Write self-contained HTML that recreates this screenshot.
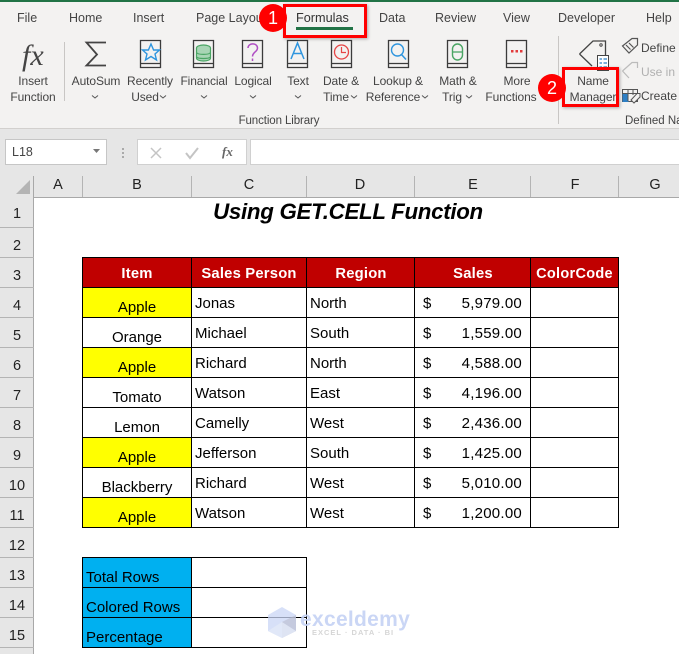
<!DOCTYPE html>
<html><head><meta charset="utf-8">
<style>
html,body{margin:0;padding:0}
body{width:679px;height:654px;overflow:hidden;position:relative;background:#fff;font-family:"Liberation Sans",sans-serif;color:#000}
.a{position:absolute}
.t{position:absolute;white-space:nowrap;line-height:16px}
.c{transform:translateX(-50%)}
.tab{font-size:12.5px;color:#444;top:10px}
.rb{font-size:12px;color:#444;letter-spacing:-.1px;transform:translateX(-50%);line-height:16px;position:absolute;white-space:nowrap}
.ch{font-size:14.5px;color:#222;top:177px;transform:translateX(-50%);position:absolute;line-height:16px}
.rh{font-size:14.5px;color:#222;left:0;width:34px;text-align:center;position:absolute;line-height:16px}
.h{position:absolute;left:0;width:34px;height:1px;background:#b4b4b4}
.v{position:absolute;top:176px;width:1px;height:21px;background:#b4b4b4}
.hd{position:absolute;font-weight:bold;font-size:14.8px;letter-spacing:.2px;color:#fff;top:265px;line-height:18px;white-space:nowrap;transform:translateX(-50%)}
.d{position:absolute;font-size:15px;line-height:18px;margin-top:1px;white-space:nowrap;color:#000}
.m{transform:translateX(-50%)}
.r{transform:translateX(-100%);letter-spacing:.25px}
.bk{background:#000;position:absolute}
.badge{position:absolute;width:28px;height:28px;border-radius:50%;background:#f00;color:#fff;font-size:18px;line-height:28px;text-align:center}
svg{position:absolute;overflow:visible}
</style></head><body>

<!-- ribbon -->
<div class="a" style="left:0;top:0;width:679px;height:128px;background:#f3f2f1"></div>
<div class="a" style="left:0;top:0;width:679px;height:2px;background:#217346"></div>
<div class="a" style="left:0;top:128px;width:679px;height:1px;background:#d2d0ce"></div>
<div class="a" style="left:0;top:129px;width:679px;height:68px;background:#e6e6e6"></div>

<span class="t tab" style="left:17px">File</span>
<span class="t tab" style="left:69px">Home</span>
<span class="t tab" style="left:133px">Insert</span>
<span class="t tab" style="left:196px;width:68px;overflow:hidden">Page Layout</span>
<span class="t tab" style="left:296px;font-size:12.7px;color:#333">Formulas</span>
<div class="a" style="left:296px;top:27px;width:57px;height:3px;background:#217346"></div>
<span class="t tab" style="left:379px">Data</span>
<span class="t tab" style="left:435px">Review</span>
<span class="t tab" style="left:503px">View</span>
<span class="t tab" style="left:558px">Developer</span>
<span class="t tab" style="left:646px">Help</span>

<!-- separators -->
<div class="a" style="left:64px;top:42px;width:1px;height:59px;background:#c8c6c4"></div>
<div class="a" style="left:558px;top:36px;width:1px;height:88px;background:#c8c6c4"></div>

<!-- icons -->
<span class="t" style="left:22px;top:42px;font-family:'Liberation Serif',serif;font-style:italic;font-size:30px;line-height:28px;color:#444">fx</span>
<svg style="left:0;top:0" width="679" height="130" fill="none">
<path d="M106 42.500H86.500L97 54.500L86.500 65.500H106" stroke="#444" stroke-width="1.800"/>
<!-- books -->
<g stroke="#3b3b3b" stroke-width="1.300">
<path d="M140.500 40.500H160.500V67.500H140.500ZM140.500 63.500H160.500"/>
<path d="M193.500 40.500H213.500V67.500H193.500ZM193.500 63.500H213.500"/>
<path d="M242.500 40.500H262.500V67.500H242.500ZM242.500 63.500H262.500"/>
<path d="M287.500 40.500H307.500V67.500H287.500ZM287.500 63.500H307.500"/>
<path d="M331.500 40.500H351.500V67.500H331.500ZM331.500 63.500H351.500"/>
<path d="M388.500 40.500H408.500V67.500H388.500ZM388.500 63.500H408.500"/>
<path d="M447.500 40.500H467.500V67.500H447.500ZM447.500 63.500H467.500"/>
<path d="M506.500 40.500H526.500V67.500H506.500ZM506.500 63.500H526.500"/>
</g>
<path d="M151 44L153.600 50H159.500L155 54L156.500 60L151 56.500L145.500 60L147 54L142.500 50H148.400Z" stroke="#2e95de" stroke-width="1.400"/>
<g stroke="#4aa564" stroke-width="1.200" fill="#a8d5b5"><ellipse cx="203.500" cy="48" rx="7" ry="3"/><path d="M196.500 48V58C196.500 60 200 61 203.500 61S210.500 60 210.500 58V48"/><path d="M196.500 52.500C198 55 209 55 210.500 52.500M196.500 57C198 59 209 59 210.500 57" fill="none"/></g>
<path d="M248 48C248 42.500 257.500 42.500 257.500 48C257.500 52 252.500 52 252.500 56.500M252.500 58.500V61" stroke="#b04fc4" stroke-width="1.500"/>
<path d="M291 59L297.500 43L304 59M293.500 53.500H301.500" stroke="#2e95de" stroke-width="1.500"/>
<circle cx="341.500" cy="52" r="7" stroke="#e64545" stroke-width="1.300"/><path d="M341.500 47V52.500H346" stroke="#e64545" stroke-width="1.200"/>
<circle cx="397.500" cy="50" r="6" stroke="#2e95de" stroke-width="1.400"/><path d="M401.500 54.500L406 59.500" stroke="#2e95de" stroke-width="1.500"/>
<rect x="452.500" y="44" width="10" height="16" rx="5" stroke="#4aa564" stroke-width="1.400"/><path d="M452.500 52H462.500" stroke="#4aa564" stroke-width="1.300"/>
<g fill="#e23b3b"><rect x="511" y="50" width="2.500" height="2.500"/><rect x="515.500" y="50" width="2.500" height="2.500"/><rect x="520" y="50" width="2.500" height="2.500"/></g>
<!-- tag -->
<path d="M579.500 54L593 41H605.500V56M592 66L579.500 54" stroke="#444" stroke-width="1.300"/>
<circle cx="601" cy="45" r="1.200" stroke="#444"/>
<rect x="597.500" y="55.500" width="11" height="15" fill="#fff" stroke="#444"/>
<path d="M599.500 59h2.500M603.500 59h3.500M599.500 63h2.500M603.500 63h3.500M599.500 67h2.500M603.500 67h3.500" stroke="#2e7fc4" stroke-width="1.300"/>
<path d="M622.500 46L632 38.500H637.500V45L629 53ZM626 45L630.500 49.500M629 43L633.500 47.500" stroke="#555" stroke-width="1.200"/>
<path d="M622.500 71L632 62.500H637.500V68M629 78L622.500 71" stroke="#bbb" stroke-width="1.200"/>
<rect x="622.500" y="89.500" width="15" height="12" stroke="#555"/><rect x="622.500" y="94" width="6" height="8" fill="#2e7fc4"/><path d="M622.500 93.500H637.500M628 89.500V101M633 89.500V95" stroke="#555"/><path d="M631 100L637 93.500H640V97L634 103Z" fill="#f3f2f1" stroke="#555"/>
<!-- chevrons -->
<g stroke="#555" stroke-width="1"><path d="M92 95.500l3 2.500l3-2.500"/><path d="M160 95.500l3 2.500l3-2.500"/><path d="M201 95.500l3 2.500l3-2.500"/><path d="M250 95.500l3 2.500l3-2.500"/><path d="M295 95.500l3 2.500l3-2.500"/><path d="M351 95.500l3 2.500l3-2.500"/><path d="M422 95.500l3 2.500l3-2.500"/><path d="M466 95.500l3 2.500l3-2.500"/></g>
</svg>

<span class="rb" style="left:33px;top:73px">Insert</span><span class="rb" style="left:33px;top:89px">Function</span>
<span class="rb" style="left:96px;top:73px">AutoSum</span>
<span class="rb" style="left:150px;top:73px">Recently</span><span class="rb" style="left:145px;top:89px">Used</span>
<span class="rb" style="left:204px;top:73px">Financial</span>
<span class="rb" style="left:253px;top:73px">Logical</span>
<span class="rb" style="left:298px;top:73px">Text</span>
<span class="rb" style="left:341px;top:73px">Date &amp;</span><span class="rb" style="left:336px;top:89px">Time</span>
<span class="rb" style="left:398px;top:73px">Lookup &amp;</span><span class="rb" style="left:393px;top:89px">Reference</span>
<span class="rb" style="left:458px;top:73px">Math &amp;</span><span class="rb" style="left:452px;top:89px">Trig</span>
<span class="rb" style="left:517px;top:73px">More</span><span class="rb" style="left:511px;top:89px">Functions</span>
<span class="rb" style="left:593px;top:73px">Name</span><span class="rb" style="left:593px;top:89px">Manager</span>
<span class="t" style="left:641px;top:40px;font-size:12px;color:#444">Define</span>
<span class="t" style="left:641px;top:64px;font-size:12px;color:#b0b0b0">Use in F</span>
<span class="t" style="left:641px;top:88px;font-size:12px;color:#444">Create f</span>
<span class="rb" style="left:279px;top:113px;font-size:11.500px">Function Library</span>
<span class="t" style="left:625px;top:113px;font-size:11.500px;color:#444">Defined Na</span>

<!-- red boxes -->
<div class="a" style="left:283px;top:4px;width:78px;height:28px;border:3px solid #f00;box-shadow:1px 1px 3px rgba(0,0,0,.3)"></div>
<div class="a" style="left:562px;top:67px;width:51px;height:34px;border:3px solid #f00;box-shadow:1px 1px 3px rgba(0,0,0,.3)"></div>
<div class="badge" style="left:259px;top:4px">1</div>
<div class="badge" style="left:538px;top:74px">2</div>

<!-- formula bar -->
<div class="a" style="left:5px;top:139px;width:100px;height:24px;background:#fff;border:1px solid #c6c6c6"></div>
<span class="t" style="left:12px;top:144px;font-size:12.500px;color:#444">L18</span>
<svg style="left:0;top:0" width="300" height="170"><path d="M93 149H100L96.500 153Z" fill="#777"/><path d="M122 148h2v2h-2zM122 152h2v2h-2zM122 156h2v2h-2z" fill="#aaa"/></svg>
<div class="a" style="left:137px;top:139px;width:108px;height:24px;background:#fff;border:1px solid #d0d0d0"></div>
<svg style="left:0;top:0" width="300" height="170"><path d="M151 148L161 158M161 148L151 158" stroke="#c4c4c4" stroke-width="1.500" fill="none"/><path d="M186 153L190 158L198 148" stroke="#c4c4c4" stroke-width="2" fill="none"/></svg>
<span class="t" style="left:222px;top:144px;font-family:'Liberation Serif',serif;font-style:italic;font-weight:bold;font-size:13px;color:#666">fx</span>
<div class="a" style="left:250px;top:139px;width:429px;height:24px;background:#fff;border:1px solid #d0d0d0;border-right:0;box-sizing:content-box"></div>

<!-- headers -->
<div class="a" style="left:0;top:197px;width:679px;height:1px;background:#a8a8a8"></div>
<div class="a" style="left:0;top:197px;width:34px;height:457px;background:#e6e6e6"></div>
<div class="a" style="left:33px;top:176px;width:1px;height:478px;background:#a8a8a8"></div>
<svg style="left:0;top:0" width="40" height="200"><path d="M30 180V194H16Z" fill="#b4b4b4"/></svg>
<div class="v" style="left:82px"></div><div class="v" style="left:191px"></div><div class="v" style="left:306px"></div><div class="v" style="left:414px"></div><div class="v" style="left:530px"></div><div class="v" style="left:618px"></div>
<span class="ch" style="left:58px">A</span><span class="ch" style="left:137px">B</span><span class="ch" style="left:249px">C</span><span class="ch" style="left:360px">D</span><span class="ch" style="left:473px">E</span><span class="ch" style="left:575px">F</span><span class="ch" style="left:655px">G</span>

<div class="h" style="top:227px"></div><div class="h" style="top:257px"></div><div class="h" style="top:287px"></div><div class="h" style="top:317px"></div><div class="h" style="top:347px"></div><div class="h" style="top:377px"></div><div class="h" style="top:407px"></div><div class="h" style="top:437px"></div><div class="h" style="top:467px"></div><div class="h" style="top:497px"></div><div class="h" style="top:527px"></div><div class="h" style="top:557px"></div><div class="h" style="top:587px"></div><div class="h" style="top:617px"></div><div class="h" style="top:647px"></div>
<span class="rh" style="top:206px">1</span><span class="rh" style="top:238px">2</span><span class="rh" style="top:268px">3</span><span class="rh" style="top:298px">4</span><span class="rh" style="top:328px">5</span><span class="rh" style="top:358px">6</span><span class="rh" style="top:388px">7</span><span class="rh" style="top:418px">8</span><span class="rh" style="top:448px">9</span><span class="rh" style="top:478px">10</span><span class="rh" style="top:508px">11</span><span class="rh" style="top:538px">12</span><span class="rh" style="top:568px">13</span><span class="rh" style="top:598px">14</span><span class="rh" style="top:628px">15</span>

<!-- title -->
<span class="t c" style="left:348px;top:199px;font-size:22.300px;line-height:26px;font-weight:bold;font-style:italic;letter-spacing:-.3px">Using GET.CELL Function</span>

<!-- fills -->
<div class="a" style="left:82px;top:257px;width:537px;height:30px;background:#c00000"></div>
<div class="a" style="left:82px;top:287px;width:109px;height:30px;background:#ff0"></div>
<div class="a" style="left:82px;top:347px;width:109px;height:30px;background:#ff0"></div>
<div class="a" style="left:82px;top:437px;width:109px;height:30px;background:#ff0"></div>
<div class="a" style="left:82px;top:497px;width:109px;height:30px;background:#ff0"></div>
<div class="a" style="left:82px;top:557px;width:109px;height:90px;background:#00b0f0"></div>

<!-- borders main -->
<div class="bk" style="left:82px;top:257px;width:537px;height:1px"></div>
<div class="bk" style="left:82px;top:287px;width:537px;height:1px"></div>
<div class="bk" style="left:82px;top:317px;width:537px;height:1px"></div>
<div class="bk" style="left:82px;top:347px;width:537px;height:1px"></div>
<div class="bk" style="left:82px;top:377px;width:537px;height:1px"></div>
<div class="bk" style="left:82px;top:407px;width:537px;height:1px"></div>
<div class="bk" style="left:82px;top:437px;width:537px;height:1px"></div>
<div class="bk" style="left:82px;top:467px;width:537px;height:1px"></div>
<div class="bk" style="left:82px;top:497px;width:537px;height:1px"></div>
<div class="bk" style="left:82px;top:527px;width:537px;height:1px"></div>
<div class="bk" style="left:82px;top:257px;width:1px;height:271px"></div>
<div class="bk" style="left:191px;top:257px;width:1px;height:271px"></div>
<div class="bk" style="left:306px;top:257px;width:1px;height:271px"></div>
<div class="bk" style="left:414px;top:257px;width:1px;height:271px"></div>
<div class="bk" style="left:530px;top:257px;width:1px;height:271px"></div>
<div class="bk" style="left:618px;top:257px;width:1px;height:271px"></div>
<!-- borders small -->
<div class="bk" style="left:82px;top:557px;width:225px;height:1px"></div>
<div class="bk" style="left:82px;top:587px;width:225px;height:1px"></div>
<div class="bk" style="left:82px;top:617px;width:225px;height:1px"></div>
<div class="bk" style="left:82px;top:647px;width:225px;height:1px"></div>
<div class="bk" style="left:82px;top:557px;width:1px;height:91px"></div>
<div class="bk" style="left:191px;top:557px;width:1px;height:91px"></div>
<div class="bk" style="left:306px;top:557px;width:1px;height:91px"></div>

<!-- table text -->
<span class="hd" style="left:137px">Item</span><span class="hd" style="left:249px">Sales Person</span><span class="hd" style="left:361px">Region</span><span class="hd" style="left:473px">Sales</span><span class="hd" style="left:574.500px;font-size:14.500px;letter-spacing:.3px">ColorCode</span>

<span class="d m" style="left:137px;top:298px">Apple</span><span class="d m" style="left:137px;top:328px">Orange</span><span class="d m" style="left:137px;top:358px">Apple</span><span class="d m" style="left:137px;top:388px">Tomato</span><span class="d m" style="left:137px;top:418px">Lemon</span><span class="d m" style="left:137px;top:448px">Apple</span><span class="d m" style="left:137px;top:478px">Blackberry</span><span class="d m" style="left:137px;top:508px">Apple</span>

<span class="d" style="left:195px;top:294px">Jonas</span><span class="d" style="left:195px;top:324px">Michael</span><span class="d" style="left:195px;top:354px">Richard</span><span class="d" style="left:195px;top:384px">Watson</span><span class="d" style="left:195px;top:414px">Camelly</span><span class="d" style="left:195px;top:444px">Jefferson</span><span class="d" style="left:195px;top:474px">Richard</span><span class="d" style="left:195px;top:504px">Watson</span>

<span class="d" style="left:310px;top:294px">North</span><span class="d" style="left:310px;top:324px">South</span><span class="d" style="left:310px;top:354px">North</span><span class="d" style="left:310px;top:384px">East</span><span class="d" style="left:310px;top:414px">West</span><span class="d" style="left:310px;top:444px">South</span><span class="d" style="left:310px;top:474px">West</span><span class="d" style="left:310px;top:504px">West</span>

<span class="d" style="left:423px;top:294px">$</span><span class="d" style="left:423px;top:324px">$</span><span class="d" style="left:423px;top:354px">$</span><span class="d" style="left:423px;top:384px">$</span><span class="d" style="left:423px;top:414px">$</span><span class="d" style="left:423px;top:444px">$</span><span class="d" style="left:423px;top:474px">$</span><span class="d" style="left:423px;top:504px">$</span>

<span class="d r" style="left:522px;top:294px">5,979.00</span><span class="d r" style="left:522px;top:324px">1,559.00</span><span class="d r" style="left:522px;top:354px">4,588.00</span><span class="d r" style="left:522px;top:384px">4,196.00</span><span class="d r" style="left:522px;top:414px">2,436.00</span><span class="d r" style="left:522px;top:444px">1,425.00</span><span class="d r" style="left:522px;top:474px">5,010.00</span><span class="d r" style="left:522px;top:504px">1,200.00</span>

<span class="d" style="left:86px;top:568px">Total Rows</span><span class="d" style="left:86px;top:598px">Colored Rows</span><span class="d" style="left:86px;top:628px">Percentage</span>

<!-- watermark -->
<svg style="left:0;top:0" width="679" height="654" fill="none"><path d="M282 607L296 615V631L282 638L268 631V615Z" fill="#c9d6f5" opacity=".75"/><path d="M282 622L296 615V631L282 638Z" fill="#b4b4c4" opacity=".5"/><path d="M282 622L268 631L282 638L296 631Z" fill="#e4eaf8" opacity=".8"/></svg>
<span class="t" style="left:300px;top:608px;font-size:21px;font-weight:bold;color:#c5d2f5;letter-spacing:.3px;line-height:24px;opacity:.9">exceldemy</span>
<span class="t" style="left:312px;top:628px;font-size:7.500px;font-weight:bold;color:#d6d6d6;letter-spacing:1px;line-height:10px">EXCEL · DATA · BI</span>

</body></html>
